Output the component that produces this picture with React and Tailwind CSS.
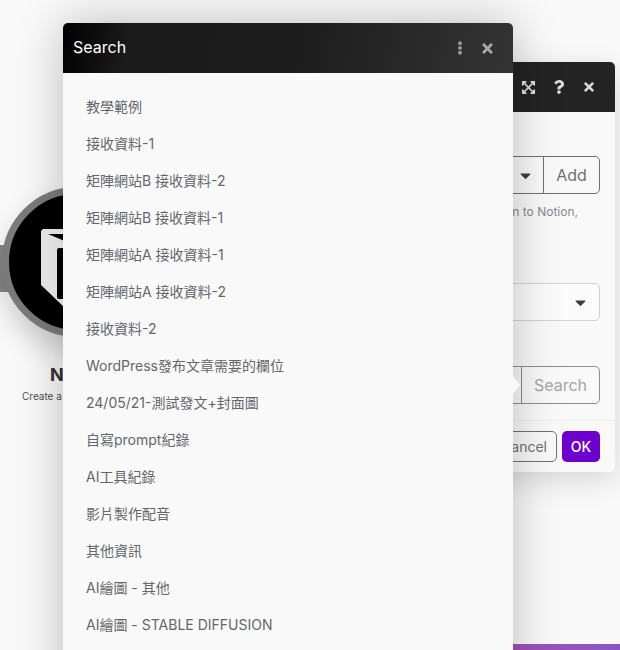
import { FaCaretDown, FaEllipsisV, FaExpandArrowsAlt, FaQuestion, FaTimes } from "react-icons/fa";

const items = [
  "教學範例",
  "接收資料-1",
  "矩陣網站B 接收資料-2",
  "矩陣網站B 接收資料-1",
  "矩陣網站A 接收資料-1",
  "矩陣網站A 接收資料-2",
  "接收資料-2",
  "WordPress發布文章需要的欄位",
  "24/05/21-測試發文+封面圖",
  "自寫prompt紀錄",
  "AI工具紀錄",
  "影片製作配音",
  "其他資訊",
  "AI繪圖 - 其他",
  "AI繪圖 - STABLE DIFFUSION",
];

const NotionNode = () => (
  <div className="absolute left-0 top-[187px] w-[160px]">
    <div className="absolute left-0 top-[58px] w-[9px] h-[47px] bg-[#858585]"></div>
    <div className="absolute left-[2px] top-0 w-[150px] h-[150px] rounded-full bg-black border-[7px] border-[#7b7b7b] shadow-[0_14px_28px_rgba(0,0,0,0.18)]">
      <svg viewBox="0 0 26 80" className="absolute left-[32px] top-[34px] w-[26px] h-[80px]" fill="none">
        <defs>
          <linearGradient id="cube" x1="0" x2="1" y1="0" y2="0">
            <stop offset="0" stopColor="#ececec" />
            <stop offset="1" stopColor="#fafafa" />
          </linearGradient>
        </defs>
        <path d="M2 1 L26 1 L26 80 L24 80 L0 57 L0 3 Z" fill="url(#cube)" />
        <path d="M7 6 L26 6 L26 14 Z" fill="#000" />
        <path d="M16 22 Q16 20 18 20 H26 V71 H18 Q16 71 16 69 Z" fill="#000" />
      </svg>
    </div>
    <div className="absolute left-[50px] top-[176px] text-[18px] font-bold text-[#2f3238] leading-6">N</div>
    <div className="absolute left-[22px] top-[202px] text-[10px] text-[#4a4f55] leading-[14px] whitespace-nowrap">Create a</div>
  </div>
);

const BackDialog = () => (
  <div className="absolute left-[200px] top-[62px] w-[415px] h-[410px] rounded-[5px] bg-[#f9f9f9] shadow-[0_8px_30px_rgba(0,0,0,0.14)] flex flex-col">
    <div className="h-[50px] shrink-0 rounded-t-[5px] bg-[#232323] flex items-center justify-end gap-4 pr-[19px] text-[#dcdcdc]">
      <FaExpandArrowsAlt size={15} />
      <FaQuestion size={14} />
      <FaTimes size={14} />
    </div>
    <div className="flex-1 px-[15px] flex flex-col items-end">
      <div className="mt-[44px] h-[38px] w-[300px] flex border border-[#6d7278] rounded-[5px]">
        <div className="flex-1 flex items-center justify-end pr-[9px] text-[#3b3f45]"><FaCaretDown size={17} /></div>
        <div className="w-[56px] border-l border-[#6d7278] flex items-center justify-center text-[16px] text-[#6d7278]">Add</div>
      </div>
      <p className="mt-[9px] pr-[22px] text-[12px] leading-[17px] text-[#868b91]">Connection to Notion,</p>
      <div className="mt-[63px] h-[38px] w-[300px] flex items-center justify-end pr-[10px] border border-[#cfd2d5] rounded-[5px] bg-[#fbfbfb] text-[#3b3f45]">
        <FaCaretDown size={17} />
      </div>
      <div className="mt-[45px] h-[38px] w-[300px] flex justify-end border border-[#8a8f94] rounded-[5px]">
        <div className="w-[78px] border-l border-[#8a8f94] flex items-center justify-center text-[16px] text-[#a2a6ab]">Search</div>
      </div>
    </div>
    <div className="h-[52px] shrink-0 border-t border-[#ececec] flex items-center justify-end gap-[5px] pr-[15px] pb-[1px]">
      <div className="h-[31px] px-[9px] border border-[#6d7278] rounded-[5px] flex items-center text-[14px] text-[#6d7278]">Cancel</div>
      <div className="h-[31px] w-[38px] rounded-[5px] bg-[#6d00cc] flex items-center justify-center text-[14px] font-medium text-white">OK</div>
    </div>
  </div>
);

const SearchDialog = () => (
  <div className="absolute left-[63px] top-[23px] w-[450px] h-[700px] rounded-t-[5px] bg-[#f9f9f9] shadow-[0_0_50px_rgba(0,0,0,0.24)]">
    <div className="h-[50px] rounded-t-[5px] bg-[linear-gradient(100deg,#000_0%,#1b1b1b_15%,#1c1c1c_50%,#343434_100%)] flex items-center pl-[10px] pr-[18px]">
      <div className="flex-1 text-[16px] leading-[48px] pb-[2px] text-white">Search</div>
      <FaEllipsisV size={14} className="text-[#9a9a9a] mr-[13px]" />
      <FaTimes size={15} className="text-[#a8a8a8]" />
    </div>
    <div className="pt-[15px] px-[23px]">
      {items.map((item) => (
        <div key={item} className="h-[37px] flex items-center text-[14px] text-[#62676d] whitespace-nowrap">{item}</div>
      ))}
    </div>
  </div>
);

export default function App() {
  return (
    <div className="relative w-[620px] h-[650px] overflow-hidden bg-[#f9f9f9] font-['Inter','Noto_Sans_CJK_TC',sans-serif]">
      <NotionNode />
      <BackDialog />
      <div className="absolute left-[513px] bottom-0 w-[107px] h-[6px] bg-[linear-gradient(90deg,#a251b6,#8b56c2)]"></div>
      <SearchDialog />
      <div className="absolute left-[513px] top-[376px] w-0 h-0 border-y-[9px] border-l-[7px] border-y-transparent border-l-[#f9f9f9]"></div>
    </div>
  );
}
